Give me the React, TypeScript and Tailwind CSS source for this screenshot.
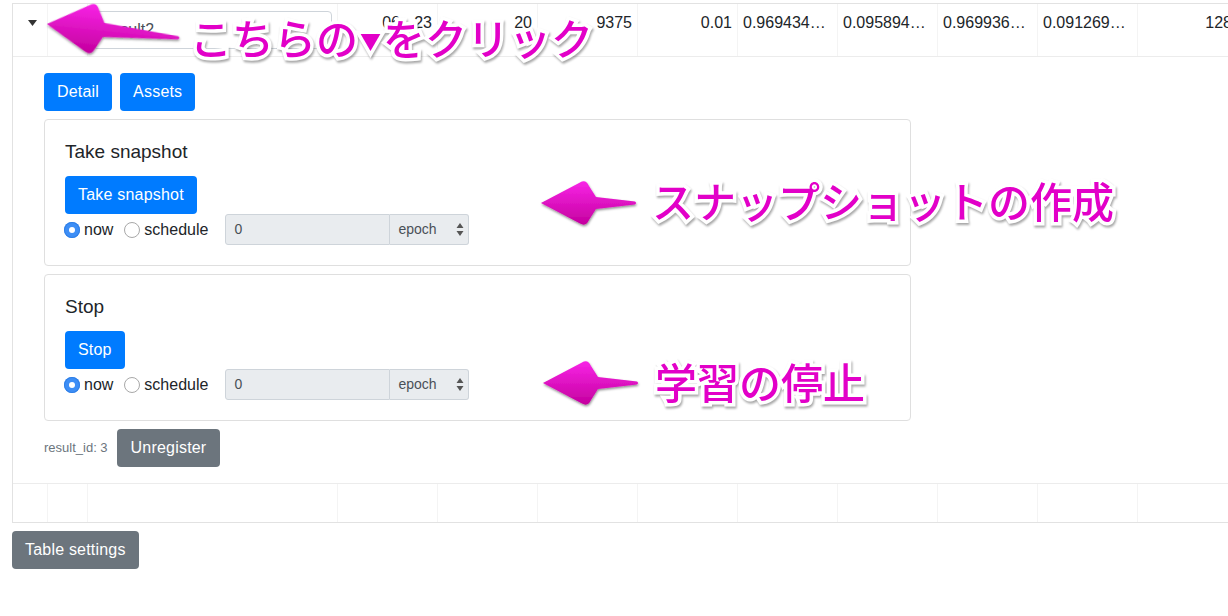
import React from "react";

const COLS = [35, 40, 250, 100, 100, 100, 100, 100, 100, 100, 100, 100, 100];

function arrowPath(L: number, H: number, HL: number, S: number) {
  return `M0,0 L${HL - 5},${-(H - 1.5)} Q${HL + 1},${-(H + 2)} ${HL + 4},${-(H - 5)} L${HL + 11},${-S} L${L},-1.6 Q${L + 2},0 ${L},1.6 L${HL + 11},${S} L${HL + 4},${H - 5} Q${HL + 1},${H + 2} ${HL - 5},${H - 1.5} Z`;
}

function Radio({ checked }: { checked?: boolean }) {
  return checked ? (
    <span className="flex h-4 w-4 items-center justify-center rounded-full bg-[#3d8ef6] shadow-[inset_0_0_0_1px_#2f7fe6]">
      <span className="h-[6px] w-[6px] rounded-full bg-white" />
    </span>
  ) : (
    <span className="h-4 w-4 rounded-full border border-[#a8a8a8] bg-white" />
  );
}

const btn = "h-[38px] rounded-[4px] px-[13px] text-[16px] tracking-[0.2px] text-white";

function ActionCard({ title, button }: { title: string; button: string }) {
  return (
    <div className="w-[867px] rounded-[4px] border border-[#dfdfdf] bg-white p-5">
      <div className="mb-3 text-[19px] leading-6 text-[#212529]">{title}</div>
      <button className={`${btn} bg-[#007bff]`}>{button}</button>
      <div className="flex h-[31px] items-center text-[16px]">
        <span className="-ml-px">
          <Radio checked />
        </span>
        <span className="ml-[4px] mr-[11px]">now</span>
        <Radio />
        <span className="ml-[4px] mr-[17px]">schedule</span>
        <div className="flex h-[31px]">
          <div className="flex w-[165px] items-center rounded-l-[3px] border border-[#ced4da] bg-[#e9ecef] px-2 text-[14px] text-[#495057]">0</div>
          <div className="relative flex w-[79px] items-center rounded-r-[3px] border border-l-0 border-[#ced4da] bg-[#e9ecef] pl-2 text-[14px] text-[#495057]">
            epoch
            <svg className="absolute right-[4px] top-[8px]" width="8" height="13" viewBox="0 0 8 13">
              <path d="M4 0 L7.5 5 L0.5 5 Z M0.5 8 L7.5 8 L4 13 Z" fill="#555" />
            </svg>
          </div>
        </div>
      </div>
    </div>
  );
}

export default function App() {
  const jp =
    "absolute whitespace-nowrap font-['Noto_Sans_CJK_JP','Noto_Sans_CJK_SC',sans-serif] font-medium leading-none text-[#e200c8] [-webkit-text-stroke:7px_white] [paint-order:stroke_fill] drop-shadow-[1px_2px_1px_rgba(0,0,0,0.35)]";
  return (
    <div className="relative h-[616px] w-[1228px] overflow-hidden bg-white font-['Liberation_Sans',Arial,sans-serif] text-[#212529]">
      <div className="pl-[12px] pt-[3px]">
        <div className="w-[1400px] border border-[#e2e2e2]">
          {/* data row */}
          <div className="flex h-[53px] border-b border-[#ececec] text-[16px] leading-6">
            <div className="h-[52px] w-[35px] shrink-0 border-r border-[#f4f4f4] pl-[15px] pt-[16px]">
              <svg width="9" height="6" viewBox="0 0 9 6" className="block">
                <path d="M0 0 L9 0 L4.5 6 Z" fill="#333" />
              </svg>
            </div>
            <div className="h-[52px] w-[40px] shrink-0 border-r border-[#f4f4f4]" />
            <div className="h-[52px] w-[250px] shrink-0 border-r border-[#f4f4f4] px-[5px] pt-[7px]">
              <div className="flex h-[38px] items-center rounded-[4px] border border-[#ced4da] px-3 text-[#495057]">result2</div>
            </div>
            <div className="h-[52px] w-[100px] shrink-0 border-r border-[#f4f4f4] px-[5px] pt-[7px] text-right">06 - 23</div>
            <div className="h-[52px] w-[100px] shrink-0 border-r border-[#f4f4f4] px-[5px] pt-[7px] text-right">20</div>
            <div className="h-[52px] w-[100px] shrink-0 border-r border-[#f4f4f4] px-[5px] pt-[7px] text-right">9375</div>
            <div className="h-[52px] w-[100px] shrink-0 border-r border-[#f4f4f4] px-[5px] pt-[7px] text-right">0.01</div>
            {["0.969434898", "0.095894217", "0.969936371", "0.091269315"].map((v) => (
              <div key={v} className="h-[52px] w-[100px] shrink-0 overflow-hidden text-ellipsis whitespace-nowrap border-r border-[#f4f4f4] px-[5px] pt-[7px]">
                {v}
              </div>
            ))}
            <div className="h-[52px] w-[100px] shrink-0 border-r border-[#f4f4f4] px-[5px] pt-[7px] text-right">128</div>
          </div>

          {/* expanded sub component */}
          <div className="border-b border-[#ececec] pb-4 pl-[31px] pt-4">
            <div className="mb-2 flex gap-2">
              <button className={`${btn} bg-[#007bff]`}>Detail</button>
              <button className={`${btn} bg-[#007bff]`}>Assets</button>
            </div>
            <div className="flex flex-col gap-2">
              <ActionCard title="Take snapshot" button="Take snapshot" />
              <ActionCard title="Stop" button="Stop" />
              <div className="flex items-center gap-[9px]">
                <span className="text-[13px] text-[#6c757d]">result_id: 3</span>
                <button className={`${btn} bg-[#6c757d] px-[14px]`}>Unregister</button>
              </div>
            </div>
          </div>

          {/* padding row */}
          <div className="flex h-[38px]">
            {COLS.map((w, i) => (
              <div key={i} className="h-full shrink-0 border-r border-[#f4f4f4]" style={{ width: w }} />
            ))}
          </div>
        </div>
        <button className={`${btn} mt-2 bg-[#6c757d]`}>Table settings</button>
      </div>

      {/* annotations */}
      <svg className="pointer-events-none absolute left-0 top-0" width="1228" height="616">
        <defs>
          <linearGradient id="ag" x1="0" y1="0" x2="0" y2="1">
            <stop offset="0" stopColor="#f824e6" />
            <stop offset="1" stopColor="#c4009e" />
          </linearGradient>
          <filter id="sh" x="-20%" y="-40%" width="140%" height="180%">
            <feDropShadow dx="0.5" dy="1.5" stdDeviation="0.8" floodColor="#000" floodOpacity="0.45" />
          </filter>
        </defs>
        <g transform="translate(47,24) rotate(6)" filter="url(#sh)">
          <path d={arrowPath(132, 25, 46, 7)} fill="url(#ag)" />
        </g>
        <g transform="translate(541,203)" filter="url(#sh)">
          <path d={arrowPath(94, 22, 44, 6)} fill="url(#ag)" />
        </g>
        <g transform="translate(543,383)" filter="url(#sh)">
          <path d={arrowPath(94, 22, 44, 6)} fill="url(#ag)" />
        </g>
      </svg>
      <div className={`${jp} left-[190px] top-[16px] text-[42px]`}>
        こちらの<span className="relative top-[-6px] mx-[2px] text-[21px]">▼</span>をクリック
      </div>
      <div className={`${jp} left-[652px] top-[179px] text-[42px]`}>スナップショットの作成</div>
      <div className={`${jp} left-[655px] top-[360px] text-[42px]`}>学習の停止</div>
    </div>
  );
}
